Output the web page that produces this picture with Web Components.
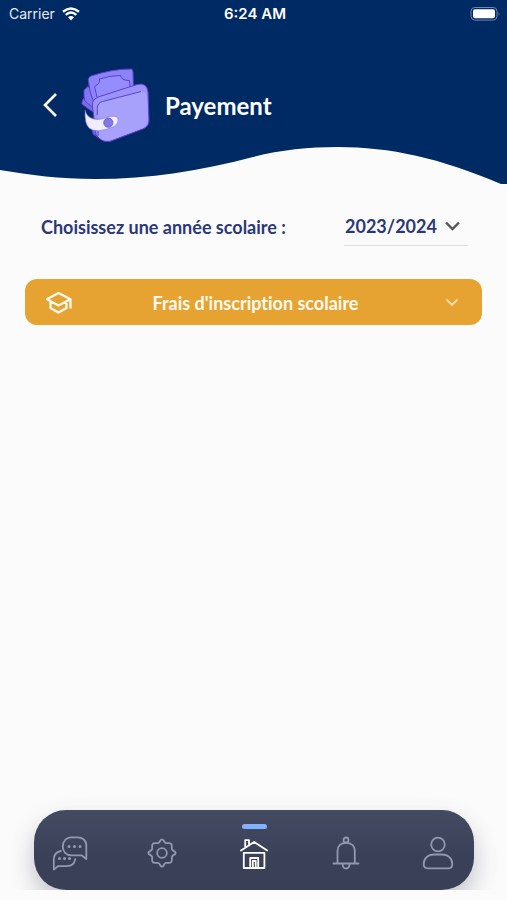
<!DOCTYPE html>
<html lang="fr">
<head>
<meta charset="utf-8">
<meta name="viewport" content="width=device-width, initial-scale=1">
<title>Payement</title>
<style>
  html { background: #fbfbfb; }
  body { margin: 0; font-family: Lato, "Liberation Sans", sans-serif; font-variant-ligatures: none; color: #2b3878; }
</style>
</head>
<body>
<payment-app></payment-app>

<template id="status-bar">
  <style>
    :host { display: grid; grid-template-columns: 1fr auto 1fr; align-items: center; height: 28px; padding: 0 6px 0 9px;
      font: 400 14px/20px Inter, "Liberation Sans", sans-serif; color: #e6eaf1; }
    .left { display: flex; align-items: center; gap: 7px; }
    .time { font-weight: 600; font-size: 15px; color: #fff; }
    .battery { justify-self: end; }
    svg { display: block; }
  </style>
  <div class="left"><span>Carrier</span>
    <svg width="18" height="14" viewBox="0 0 18 14" fill="none" stroke="#fff" stroke-width="2.4" aria-hidden="true">
      <path d="M1 4.8Q9-1.8 17 4.8M3.7 7.8Q9 3.4 14.3 7.8"/><path d="M6 10.3Q9 7.8 12 10.3L9 13.4Z" fill="#fff" stroke="none"/>
    </svg>
  </div>
  <span class="time"><slot></slot></span>
  <svg class="battery" width="31" height="14" viewBox="0 0 31 14" aria-hidden="true">
    <rect x="1" y=".5" width="26" height="12.6" rx="3.8" fill="none" stroke="#7387ab"/>
    <rect x="3" y="2.3" width="22" height="9" rx="2" fill="#fff"/>
    <path d="M28.6 4.7q1.8 2 0 4z" fill="#7387ab"/>
  </svg>
</template>

<template id="wallet-art">
  <style>:host { display: block; } svg { display: block; }</style>
  <svg width="70" height="74" viewBox="0 0 70 74" stroke="#5b40cf" stroke-width="1" stroke-linejoin="round" aria-hidden="true">
    <path d="M3 30Q1 32 .8 36L9 42 14 45 14 34Z" fill="#7a6ceb"/>
    <path d="M7 18.5L3 22Q2.5 28 4 33L12 40 16 28Z" fill="#8376f2"/>
    <path d="M11 58L12 66 15 68 19 71 20 58Z" fill="#7767e5"/>
    <path d="M7.3 11.5Q7.5 9 10 8Q31 1 50 1Q52 1 52 4L52.5 22 13 35Q8 24 7.3 11.5Z" fill="#8c83f9"/>
    <path d="M16 29L13.5 18.5Q19.5 15.5 18.5 11Q29 7.5 39.5 7.5Q40 12.5 48.5 12.5L49.5 22" fill="#958cfe"/>
    <path d="M11.3 37Q11.3 31 18 28.7L56 16.5Q66 14 67 24L68 52Q68 58 63 60.5L30 73Q23 75 18 70L15 67Z" fill="#9b93f6"/>
    <path d="M17 68L16.3 41Q16 35 21.5 33.5L58 23.5Q65 22 66 29L67 51Q67 57 62 60L30 72Q22 74 17 68Z" fill="#a8a1fb" stroke="none"/>
    <path d="M16.3 47V40.3Q16.3 35 21.5 33.5L60 23.5M17 63V68" fill="none"/>
    <path d="M4 42Q5 47 9 49.5Q14 52.5 20 51L30 48.3Q37 47.5 37.3 52Q37.5 56.5 32 59Q15 66 8 60Q3.5 56 4 42Z" fill="#efedff" stroke="#7768e4" stroke-width=".6"/>
    <circle cx="27.3" cy="54.7" r="4.6" fill="#8378ea" stroke-width=".7"/>
  </svg>
</template>

<template id="page-header">
  <style>
    :host { display: block; color: #fff; }
    .bar { background: #002a63; }
    .row { display: flex; align-items: center; padding: 40px 24px 4px 34px; }
    button { display: grid; place-items: center; width: 32px; height: 44px; padding: 0; border: 0; background: none; color: inherit; }
    wallet-art { margin: 0 14px 0 15px; }
    h1 { margin: 0; font-size: 24px; line-height: 32px; padding-top: 2px; font-weight: 700; }
    svg { display: block; }
    .wave { width: 100%; height: 38px; }
  </style>
  <div class="bar">
    <status-bar>6:24 AM</status-bar>
    <div class="row">
      <button type="button" aria-label="Retour">
        <svg width="16" height="26" viewBox="0 0 16 26" fill="none" stroke="#fff" stroke-width="2.6" aria-hidden="true"><path d="M14 2L3 13 14 24"/></svg>
      </button>
      <wallet-art></wallet-art>
      <h1><slot></slot></h1>
    </div>
  </div>
  <svg class="wave" viewBox="0 146 507 38" preserveAspectRatio="none" aria-hidden="true">
    <path fill="#002a63" d="M0 145H507V184H501C440 158 390 147 338 147C308 147 280 150 253 157C200 171 150 179 95 179C60 179 30 175 0 170Z"/>
  </svg>
</template>

<template id="year-picker">
  <style>
    :host { display: flex; align-items: center; justify-content: space-between; padding: 0 39px 0 41px; font-size: 18px; line-height: 24px; font-weight: 700; }
    .field { display: grid; align-items: center; width: 124px; border-bottom: 1px solid #dedfe3; }
    select { grid-area: 1 / 1; appearance: none; width: 100%; height: 38px; margin: 0; padding: 0 0 0 1px; border: 0; background: none; color: inherit; font: inherit; }
    svg { grid-area: 1 / 1; justify-self: end; margin-right: 8px; pointer-events: none; }
  </style>
  <label for="year"><slot></slot></label>
  <div class="field">
    <select id="year"><option>2023/2024</option></select>
    <svg width="15" height="10" viewBox="0 0 15 10" fill="none" stroke="#555" stroke-width="2.4" aria-hidden="true"><path d="M1 1.5L7.5 8 14 1.5"/></svg>
  </div>
</template>

<template id="fee-panel">
  <style>
    :host { display: block; padding: 0 25px; }
    button { display: grid; grid-template-columns: 28px 1fr 28px; align-items: center; width: 100%; height: 46px; padding: 1px 16px 0 20px; border: 0; border-radius: 12px;
      background: #e6a331; color: #fffaf0; font: 700 18px/24px Lato, "Liberation Sans", sans-serif; font-variant-ligatures: none; }
    svg { display: block; }
    .chevron { justify-self: center; }
  </style>
  <button type="button" aria-expanded="false">
    <svg width="28" height="24" viewBox="0 0 28 24" fill="none" stroke="#fffaf0" stroke-width="2.2" stroke-linejoin="round" aria-hidden="true">
      <path d="M2 8.2L13.5 2 25.5 8.2 13.5 14.5ZM5.5 10.5V17L13.5 21.5 21.5 17V10.5M25.5 8.2V17.5"/>
    </svg>
    <span><slot></slot></span>
    <svg class="chevron" width="14" height="9" viewBox="0 0 14 9" fill="none" stroke="#f8dfb2" stroke-width="1.8" aria-hidden="true"><path d="M1.5 1.5L7 7 12.5 1.5"/></svg>
  </button>
</template>

<template id="tab-item">
  <style>
    :host { display: block; color: #9299ae; }
    :host([active]) { color: #fff; }
    a { display: grid; grid-template-columns: 36px; grid-template-rows: 5px 40px; row-gap: 4px; justify-items: center; align-items: center; color: inherit; text-decoration: none; }
    .mark { width: 25px; height: 5px; border-radius: 3px; }
    :host([active]) .mark { background: #80b3ff; }
    ::slotted(svg) { display: block; fill: none; stroke: currentColor; stroke-width: 1.8; stroke-linejoin: round; stroke-linecap: round; }
  </style>
  <a href="#"><span class="mark"></span><slot></slot></a>
</template>

<template id="tab-bar">
  <style>
    :host { display: block; padding: 24px 33px 0 34px; overflow: hidden; }
    nav { display: flex; justify-content: space-between; align-items: start; box-sizing: border-box; height: 80px; padding: 14px 18px 0; border-radius: 32px;
      background: linear-gradient(#444b61, #3a4058 60%, #393f56); box-shadow: 0 12px 24px rgba(57, 63, 86, .3); }
  </style>
  <nav aria-label="Navigation principale">
    <tab-item label="Messages"><svg width="36" height="36" viewBox="0 0 36 36" aria-hidden="true">
      <path d="M19.5 2.3H25.5C30.5 2.3 34.3 5.5 34.3 10V24L29.5 20.3H19.5C14 20.3 10.8 16.5 10.8 11.5S14 2.3 19.5 2.3Z"/>
      <path d="M8.8 16C4.5 17 1.8 20 1.8 24.5V34.5L6 31.2H15C19.5 31.2 22.5 28.5 23.2 24.2"/>
      <path stroke-width="3" d="M17 11.6h.01M22.5 11.6h.01M28 11.6h.01M7.5 23.6h.01M12.5 23.6h.01M17.5 23.6h.01"/></svg></tab-item>
    <tab-item label="Paramètres"><svg width="30" height="30" viewBox="0 0 30 30" aria-hidden="true">
      <path d="M15 1.3C16.8 1.3 16.8 4.2 18.6 5C20.4 5.8 22.6 4.2 24.2 5.8C25.8 7.4 24.2 9.6 25 11.4C25.8 13.2 28.7 13.2 28.7 15S25.8 16.8 25 18.6C24.2 20.4 25.8 22.6 24.2 24.2C22.6 25.8 20.4 24.2 18.6 25C16.8 25.8 16.8 28.7 15 28.7S13.2 25.8 11.4 25C9.6 24.2 7.4 25.8 5.8 24.2C4.2 22.6 5.8 20.4 5 18.6C4.2 16.8 1.3 16.8 1.3 15S4.2 13.2 5 11.4C5.8 9.6 4.2 7.4 5.8 5.8C7.4 4.2 9.6 5.8 11.4 5C13.2 4.2 13.2 1.3 15 1.3Z"/>
      <circle cx="15" cy="15" r="4.8"/></svg></tab-item>
    <tab-item label="Accueil" active><svg width="30" height="32" viewBox="0 0 30 32" aria-hidden="true">
      <path d="M2 13.5L15.2 5 28.2 13.5M6.2 10V3.2H10V7.4"/>
      <path d="M4.8 15.8H25.4V31H4.8ZM11.2 31V21H19.2V31M13.8 31V24H16.7V31"/></svg></tab-item>
    <tab-item label="Notifications"><svg width="28" height="34" viewBox="0 0 28 34" aria-hidden="true">
      <path d="M1.5 27.5H26.5M5.5 27V15C5.5 9.5 9 6.8 14 6.8S22.8 9.5 22.8 15V27M10.5 28C10.8 34 17.3 34 17.6 28"/>
      <circle cx="14" cy="4" r="2.5"/></svg></tab-item>
    <tab-item label="Profil"><svg width="32" height="34" viewBox="0 0 32 34" aria-hidden="true">
      <circle cx="16" cy="8.5" r="6.8"/>
      <path d="M12 18.5H20C26 18.5 30.3 22.5 30.3 28C30.3 31 29 32.3 26.5 32.3H5.5C3 32.3 1.7 31 1.7 28C1.7 22.5 6 18.5 12 18.5Z"/></svg></tab-item>
  </nav>
</template>

<template id="payment-app">
  <style>
    :host { display: flex; flex-direction: column; box-sizing: border-box; min-height: 100vh; padding-bottom: 10px; }
    main { display: flex; flex-direction: column; gap: 33px; flex: 1; padding-top: 23px; }
  </style>
  <page-header>Payement</page-header>
  <main>
    <year-picker>Choisissez une année scolaire :</year-picker>
    <fee-panel>Frais d'inscription scolaire</fee-panel>
  </main>
  <tab-bar></tab-bar>
</template>

<script>
  class TemplateElement extends HTMLElement {
    constructor() {
      super();
      const template = document.getElementById(this.localName);
      this.attachShadow({ mode: "open" }).append(template.content.cloneNode(true));
    }
  }
  class TabItem extends TemplateElement {
    connectedCallback() {
      const link = this.shadowRoot.querySelector("a");
      link.setAttribute("aria-label", this.getAttribute("label"));
      if (this.hasAttribute("active")) link.setAttribute("aria-current", "page");
    }
  }
  customElements.define("tab-item", TabItem);
  for (const name of ["status-bar", "wallet-art", "page-header", "year-picker", "fee-panel", "tab-bar", "payment-app"]) {
    customElements.define(name, class extends TemplateElement {});
  }
</script>
</body>
</html>
